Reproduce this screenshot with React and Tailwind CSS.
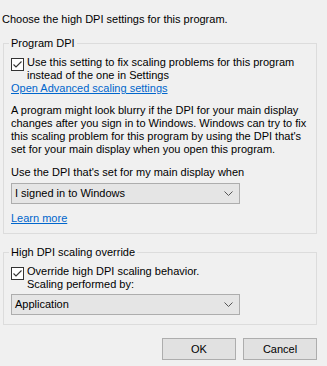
import React from 'react';

const Check = ({ checked = true }) => (
  <span className="mt-[2px] flex h-[13px] w-[13px] shrink-0 items-center justify-center border border-[#333333] bg-white">
    {checked && (
      <svg width="11" height="11" viewBox="0 0 11 11" fill="none">
        <path d="M1.5 5.5 L4 8 L9.5 2.5" stroke="#333333" strokeWidth="1.1" />
      </svg>
    )}
  </span>
);

const Dropdown = ({ value }) => (
  <div className="flex h-[21px] w-[229px] items-center justify-between border border-[#adadad] bg-[#e5e5e5] pl-[3px] pr-[6px]">
    <span>{value}</span>
    <svg width="9" height="5" viewBox="0 0 9 5" fill="none">
      <path d="M0.5 0.5 L4.5 4.5 L8.5 0.5" stroke="#555555" strokeWidth="1" />
    </svg>
  </div>
);

const Button = ({ children }) => (
  <button
    type="button"
    className="h-[22px] w-[74px] border border-[#adadad] bg-[#e1e1e1] text-center"
  >
    {children}
  </button>
);

export default function App() {
  return (
    <div className="h-[366px] w-[327px] overflow-hidden bg-[#f0f0f0] pt-[13px] font-['Liberation_Sans',Arial,sans-serif] text-[11px] leading-[13px] text-black">
      <p className="pl-[2px]">Choose the high DPI settings for this program.</p>

      {/* Program DPI */}
      <fieldset className="ml-[3px] mr-[10px] mt-[11px] border border-[#dcdcdc] pb-[8px] pl-[7px] pr-[7px]">
        <legend className="-ml-[2px] px-[2px]">Program DPI</legend>
        <div className="mt-[6px] flex items-start gap-[3px]">
          <Check />
          <span>
            Use this setting to fix scaling problems for this program
            <br />
            instead of the one in Settings
          </span>
        </div>
        <a className="block text-[#0066cc] underline">Open Advanced scaling settings</a>
        <p className="mt-[9px]">
          A program might look blurry if the DPI for your main display
          <br />
          changes after you sign in to Windows. Windows can try to fix
          <br />
          this scaling problem for this program by using the DPI that's
          <br />
          set for your main display when you open this program.
        </p>
        <p className="mt-[10px]">Use the DPI that's set for my main display when</p>
        <div className="mt-[4px]">
          <Dropdown value="I signed in to Windows" />
        </div>
        <a className="mt-[8px] inline-block text-[#0066cc] underline">Learn more</a>
      </fieldset>

      {/* High DPI scaling override */}
      <fieldset className="ml-[3px] mr-[10px] mt-[12px] border border-[#dcdcdc] pb-[9px] pl-[7px] pr-[7px]">
        <legend className="-ml-[2px] px-[2px]">High DPI scaling override</legend>
        <div className="mt-[6px] flex items-start gap-[3px]">
          <Check />
          <span>
            Override high DPI scaling behavior.
            <br />
            Scaling performed by:
          </span>
        </div>
        <div className="mt-[3px]">
          <Dropdown value="Application" />
        </div>
      </fieldset>

      <div className="mr-[10px] mt-[13px] flex justify-end gap-[7px]">
        <Button>OK</Button>
        <Button>Cancel</Button>
      </div>
    </div>
  );
}
